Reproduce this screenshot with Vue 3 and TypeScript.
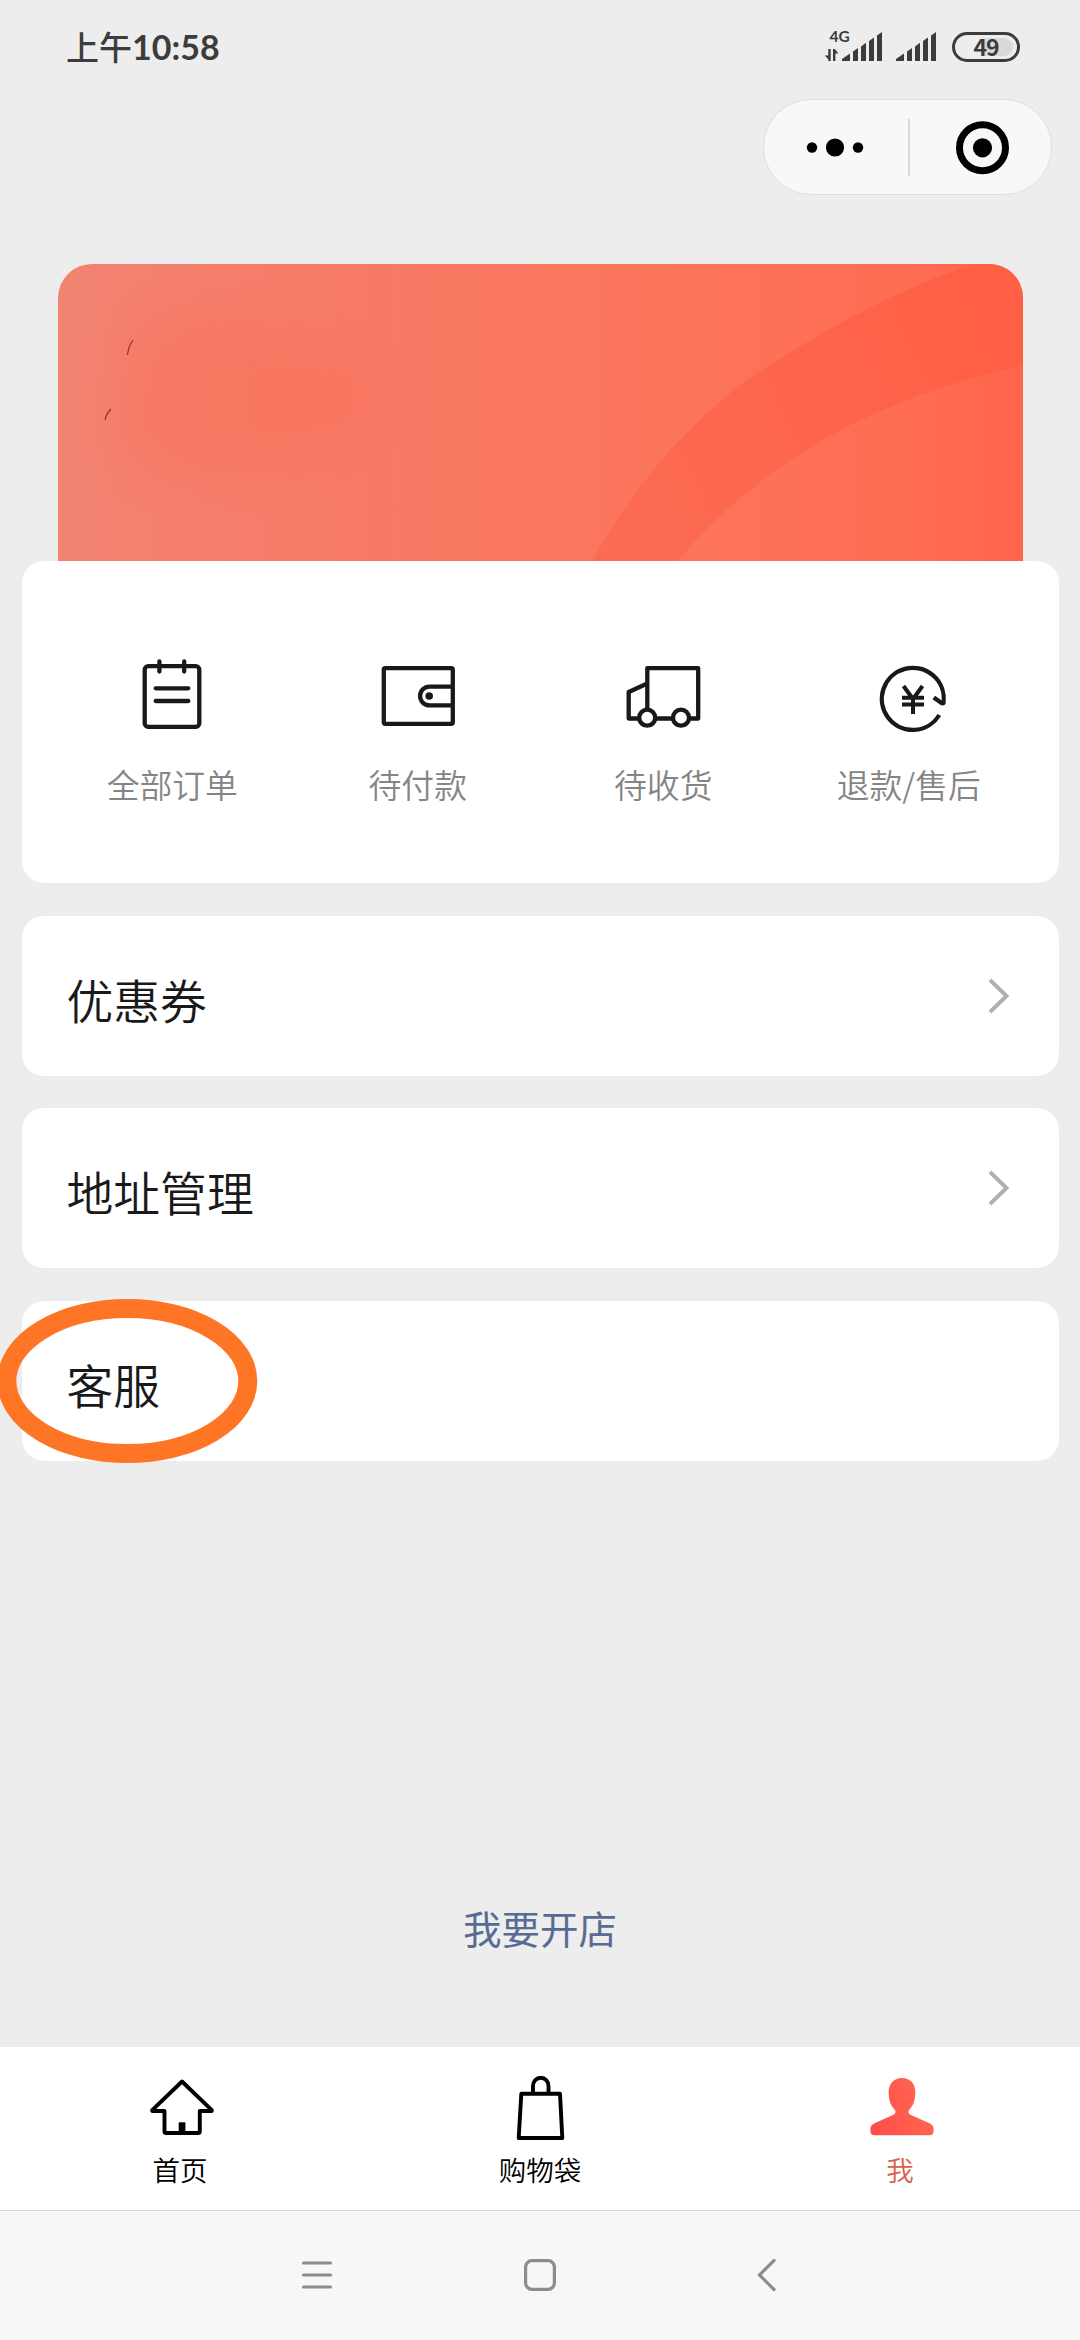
<script setup lang="ts">
interface Order { id: string; label: string }
interface Row { id: string; label: string; arrow: boolean; circled: boolean }

const orders: Order[] = [
  { id: 'all', label: '全部订单' },
  { id: 'pay', label: '待付款' },
  { id: 'ship', label: '待收货' },
  { id: 'refund', label: '退款/售后' },
]
const rows: Row[] = [
  { id: 'coupon', label: '优惠券', arrow: true, circled: false },
  { id: 'address', label: '地址管理', arrow: true, circled: false },
  { id: 'service', label: '客服', arrow: false, circled: true },
]
const tabs = [
  { id: 'home', label: '首页' },
  { id: 'bag', label: '购物袋' },
  { id: 'me', label: '我' },
]
</script>

<template>
  <div class="page">
    <header class="status">
      <span class="time"><span class="ampm">上午</span>10:58</span>
      <div class="indicators">
        <svg class="signal" width="112" height="54" viewBox="824 16 112 54">
          <text x="829.5" y="42" class="net">4G</text>
          <g fill="#3c3c3c">
            <path d="M828.3 49h2.400v12h-2.400v-1.800l-3.600-3.600h3.600zM833 49h1.800l3.600 4.400h-3v7.600H833z" />
            <path
              v-for="dx in [0, 54]"
              :key="dx"
              :transform="`translate(${dx} 0)`"
              d="M842 61v-2l8-5.500v7.500zM853 61v-9.600l5-3.400v13zM861 61v-14.600l5-3.600v18.200zM869 61V41l5-3.500V61zM877 61V35.500l5-3.500v29z"
            />
          </g>
        </svg>
        <div class="battery"><span>49</span></div>
      </div>
    </header>

    <div class="capsule-bar">
      <div class="capsule">
        <svg width="144" height="95" viewBox="764 99.500 144 95">
          <circle cx="812" cy="147" r="5.200" /><circle cx="835" cy="147" r="9.100" /><circle cx="858" cy="147" r="5.200" />
        </svg>
        <i class="split"></i>
        <svg width="143" height="95" viewBox="908 99.500 143 95">
          <circle cx="982.5" cy="147.300" r="23" fill="none" stroke="#000" stroke-width="7" />
          <circle cx="982.5" cy="147.300" r="9.600" />
        </svg>
      </div>
    </div>

    <div class="hero">
      <svg width="965" height="297" viewBox="58 264 965 297">
        <defs>
          <linearGradient id="heroBg" x1="0" y1="0" x2="1" y2="0">
            <stop offset="0" stop-color="#f28472" />
            <stop offset="0.3" stop-color="#f77a65" />
            <stop offset="0.65" stop-color="#fc745c" />
            <stop offset="0.9" stop-color="#ff6c51" />
            <stop offset="1" stop-color="#ff654a" />
          </linearGradient>
          <linearGradient id="band" gradientUnits="userSpaceOnUse" x1="600" y1="520" x2="1010" y2="330">
            <stop offset="0" stop-color="#fb6c53" />
            <stop offset="1" stop-color="#ff5f44" />
          </linearGradient>
          <filter id="soft" x="-30%" y="-30%" width="160%" height="160%"><feGaussianBlur stdDeviation="20" /></filter>
        </defs>
        <rect x="58" y="264" width="965" height="297" fill="url(#heroBg)" />
        <path d="M150 325Q220 300 300 345Q420 390 340 430Q250 500 140 465Q105 425 128 395Q124 345 150 325Z" fill="#fb7059" opacity="0.45" filter="url(#soft)" />
        <path d="M592 561C630 490 700 405 778 360C850 315 910 285 975 264H1023V365C960 380 890 402 826 438C765 474 715 515 678 561Z" fill="url(#band)" />
        <path d="M133 340Q128.500 346 127.500 355M111 409Q106 414 105 420" fill="none" stroke="#9c2a1c" stroke-width="1.200" />
      </svg>
    </div>

    <section class="card orders">
      <div v-for="o in orders" :key="o.id" class="order">
        <svg v-if="o.id === 'all'" class="line" width="80" height="80" viewBox="132 656 80 80">
          <rect x="144.700" y="666.200" width="54.600" height="60.600" rx="3.500" />
          <path d="M159.400 661.500V671.500M184.200 661.500V671.500M155.700 688.300H188.300M155.700 701H188.300" stroke-linecap="round" />
        </svg>
        <svg v-else-if="o.id === 'pay'" class="line" width="80" height="80" viewBox="377.500 656 80 80">
          <rect x="383.300" y="668.200" width="69" height="55.600" rx="1.500" />
          <path d="M452 686.600H429A9.400 9.400 0 0 0 429 705.400H452" />
          <circle cx="428.700" cy="696" r="3.800" class="solid" />
        </svg>
        <svg v-else-if="o.id === 'ship'" class="line" width="80" height="80" viewBox="622.500 656 80 80">
          <path d="M638 718.500H628.200V692L646.800 683.500M646.800 709V668.200H697.700V718.500H689M655 718.500H672" stroke-linejoin="round" />
          <circle cx="646.700" cy="717.700" r="8" /><circle cx="680.500" cy="717.700" r="8" />
        </svg>
        <svg v-else class="line" width="80" height="80" viewBox="868 656 80 80">
          <path d="M938.300 715A31 31 0 1 1 942.600 702.600Q942 704 940.500 703L932.800 697.400" stroke-linejoin="round" />
          <path d="M902.500 686L912 699L921.500 686M912 698V714M901 697.700H923M901 704.500H923" stroke-width="4" />
        </svg>
        <span>{{ o.label }}</span>
      </div>
    </section>

    <section v-for="r in rows" :key="r.id" class="card row">
      <span>{{ r.label }}</span>
      <svg v-if="r.arrow" width="22" height="40" viewBox="0 0 22 40">
        <path d="M2 4L18.500 20L2 36" fill="none" stroke="#b0b0b0" stroke-width="3.900" />
      </svg>
      <svg v-if="r.circled" class="mark" width="262" height="166" viewBox="-3 1298 262 166">
        <ellipse cx="127.300" cy="1381" rx="120.500" ry="72.500" fill="none" stroke="#ff7526" stroke-width="19" />
      </svg>
    </section>

    <div class="open-shop"><a>我要开店</a></div>

    <nav class="tabs">
      <div v-for="t in tabs" :key="t.id" class="tab" :class="{ active: t.id === 'me' }">
        <svg v-if="t.id === 'home'" width="70" height="70" viewBox="145 2073 70 70">
          <path d="M182 2081.500L152.500 2109.800Q151.500 2111 153 2111H164.500V2131.500Q164.500 2133 166 2133H198.300Q199.800 2133 199.800 2131.500V2111H211Q212.500 2111 211.500 2109.800Z" fill="none" stroke="#000" stroke-width="3.900" stroke-linejoin="round" />
          <rect x="178.700" y="2122.300" width="6.700" height="10" />
        </svg>
        <svg v-else-if="t.id === 'bag'" width="70" height="70" viewBox="505 2073 70 70">
          <path d="M521.300 2093.800H560L562.300 2138H518.700ZM533 2093V2086A7.700 8.200 0 0 1 548.500 2086V2093" fill="none" stroke="#000" stroke-width="3.900" stroke-linejoin="round" />
        </svg>
        <svg v-else width="70" height="70" viewBox="865 2073 70 70">
          <defs><linearGradient id="me" x1="0" y1="1" x2="1" y2="0.7"><stop offset="0" stop-color="#ff4c4c" /><stop offset="1" stop-color="#ff6650" /></linearGradient></defs>
          <path d="M902 2078C893 2078 888.700 2084.500 888.700 2092C888.700 2101 891 2106 895 2110Q896.300 2113 894 2114.500L873.500 2123.700Q870.400 2125.500 870.400 2128.500V2131Q870.400 2135.200 874.500 2135.200H929.500Q933.600 2135.200 933.600 2131V2128.500Q933.600 2125.500 930.500 2123.700L910 2114.500Q907.700 2113 909 2110C913 2106 915.300 2101 915.300 2092C915.300 2084.500 911 2078 902 2078Z" fill="url(#me)" />
        </svg>
        <span>{{ t.label }}</span>
      </div>
    </nav>

    <footer class="sysnav">
      <svg width="34" height="34" viewBox="0 0 34 34"><path d="M3.500 5H30.500M3.500 17H30.500M3.500 29H30.500" /></svg>
      <svg width="34" height="34" viewBox="0 0 34 34"><rect x="2.600" y="2.600" width="28.800" height="28.800" rx="6.500" /></svg>
      <svg width="34" height="34" viewBox="0 0 34 34"><path d="M28 2.500L13.500 17L28 31.500" /></svg>
    </footer>
  </div>
</template>

<style>
body { background: #ededed; }
</style>

<style scoped>
.page {
  width: 1080px;
  height: 2340px;
  overflow: hidden;
  display: flex;
  flex-direction: column;
  background: #ededed;
  font-family: "Noto Sans CJK SC", sans-serif;
  color: #191919;
}
svg { display: block; flex: none; }
.status {
  height: 99px;
  box-sizing: border-box;
  padding: 16px 60px 0 66px;
  display: flex;
  justify-content: space-between;
  align-items: flex-start;
}
.time {
  margin-top: 12px;
  font-family: Lato, "Noto Sans CJK SC", sans-serif;
  font-size: 34px;
  line-height: 36px;
  font-weight: 700;
  color: #3c3c3c;
  white-space: nowrap;
}
.ampm { font-family: "Noto Sans CJK SC", sans-serif; font-size: 33px; font-weight: 500; }
.indicators { display: flex; gap: 16px; }
.net { font: 700 15.500px Lato, sans-serif; fill: #3c3c3c; }
.battery {
  width: 68px;
  height: 30px;
  margin-top: 16px;
  box-sizing: border-box;
  border: 3px solid #3c3c3c;
  border-radius: 15px;
  padding: 3px 4px;
}
.battery span {
  display: block;
  height: 18px;
  border-radius: 9px;
  background: linear-gradient(90deg, #ededed 45%, #d9d9d9 45%);
  color: #3c3c3c;
  font: 700 23px/16px "Noto Sans CJK SC", sans-serif;
  text-align: center;
  letter-spacing: -1px;
}
.capsule-bar { height: 165px; padding-right: 28px; display: flex; justify-content: flex-end; }
.capsule {
  width: 289px;
  height: 96px;
  box-sizing: border-box;
  border: 1px solid #dedede;
  border-radius: 48px;
  background: #f8f8f8;
  display: flex;
  align-items: center;
}
.split { width: 2px; height: 57px; background: #d8d8d8; margin-right: -2px; }
.hero { width: 965px; height: 297px; margin-left: 58px; border-radius: 34px 34px 0 0; overflow: hidden; flex: none; }
.card { width: 1037px; margin-left: 22px; background: #fff; border-radius: 22px; flex: none; box-sizing: border-box; }
.orders { height: 322px; padding: 95px 27.500px 0; display: flex; }
.order { flex: 1; display: flex; flex-direction: column; align-items: center; font-size: 32.800px; line-height: 48px; font-weight: 350; color: #858585; }
.order span { margin-top: 24px; white-space: nowrap; }
.line { fill: none; stroke: #191919; stroke-width: 4.300px; }
.line .solid { fill: #191919; stroke: none; }
.row {
  height: 160px;
  margin-top: 32.700px;
  padding: 0 49.500px 0 44.500px;
  display: flex;
  justify-content: space-between;
  align-items: center;
  position: relative;
  font-size: 46.800px;
  line-height: 60px;
}
.row > span { margin-top: 6px; font-weight: 350; }
.mark { position: absolute; left: -25px; top: -3px; }
.open-shop { flex: 1; display: flex; justify-content: center; align-items: flex-end; padding-bottom: 90px; }
.open-shop a { font-size: 38.500px; line-height: 60px; color: #576b95; }
.tabs { height: 163px; flex: none; background: #fff; display: flex; }
.tab { flex: 1; padding-top: 26px; display: flex; flex-direction: column; align-items: center; font-size: 27.500px; line-height: 40px; font-weight: 350; color: #000; }
.tab span { margin-top: 6px; }
.tab.active { color: #d9604c; }
.sysnav {
  height: 130px;
  flex: none;
  box-sizing: border-box;
  border-top: 1px solid #d9d9d9;
  background: #f7f7f7;
  padding: 47px 300px 0;
  display: flex;
  justify-content: space-between;
}
.sysnav svg { fill: none; stroke: #8c8c8c; stroke-width: 3.200px; stroke-linecap: round; }
</style>
